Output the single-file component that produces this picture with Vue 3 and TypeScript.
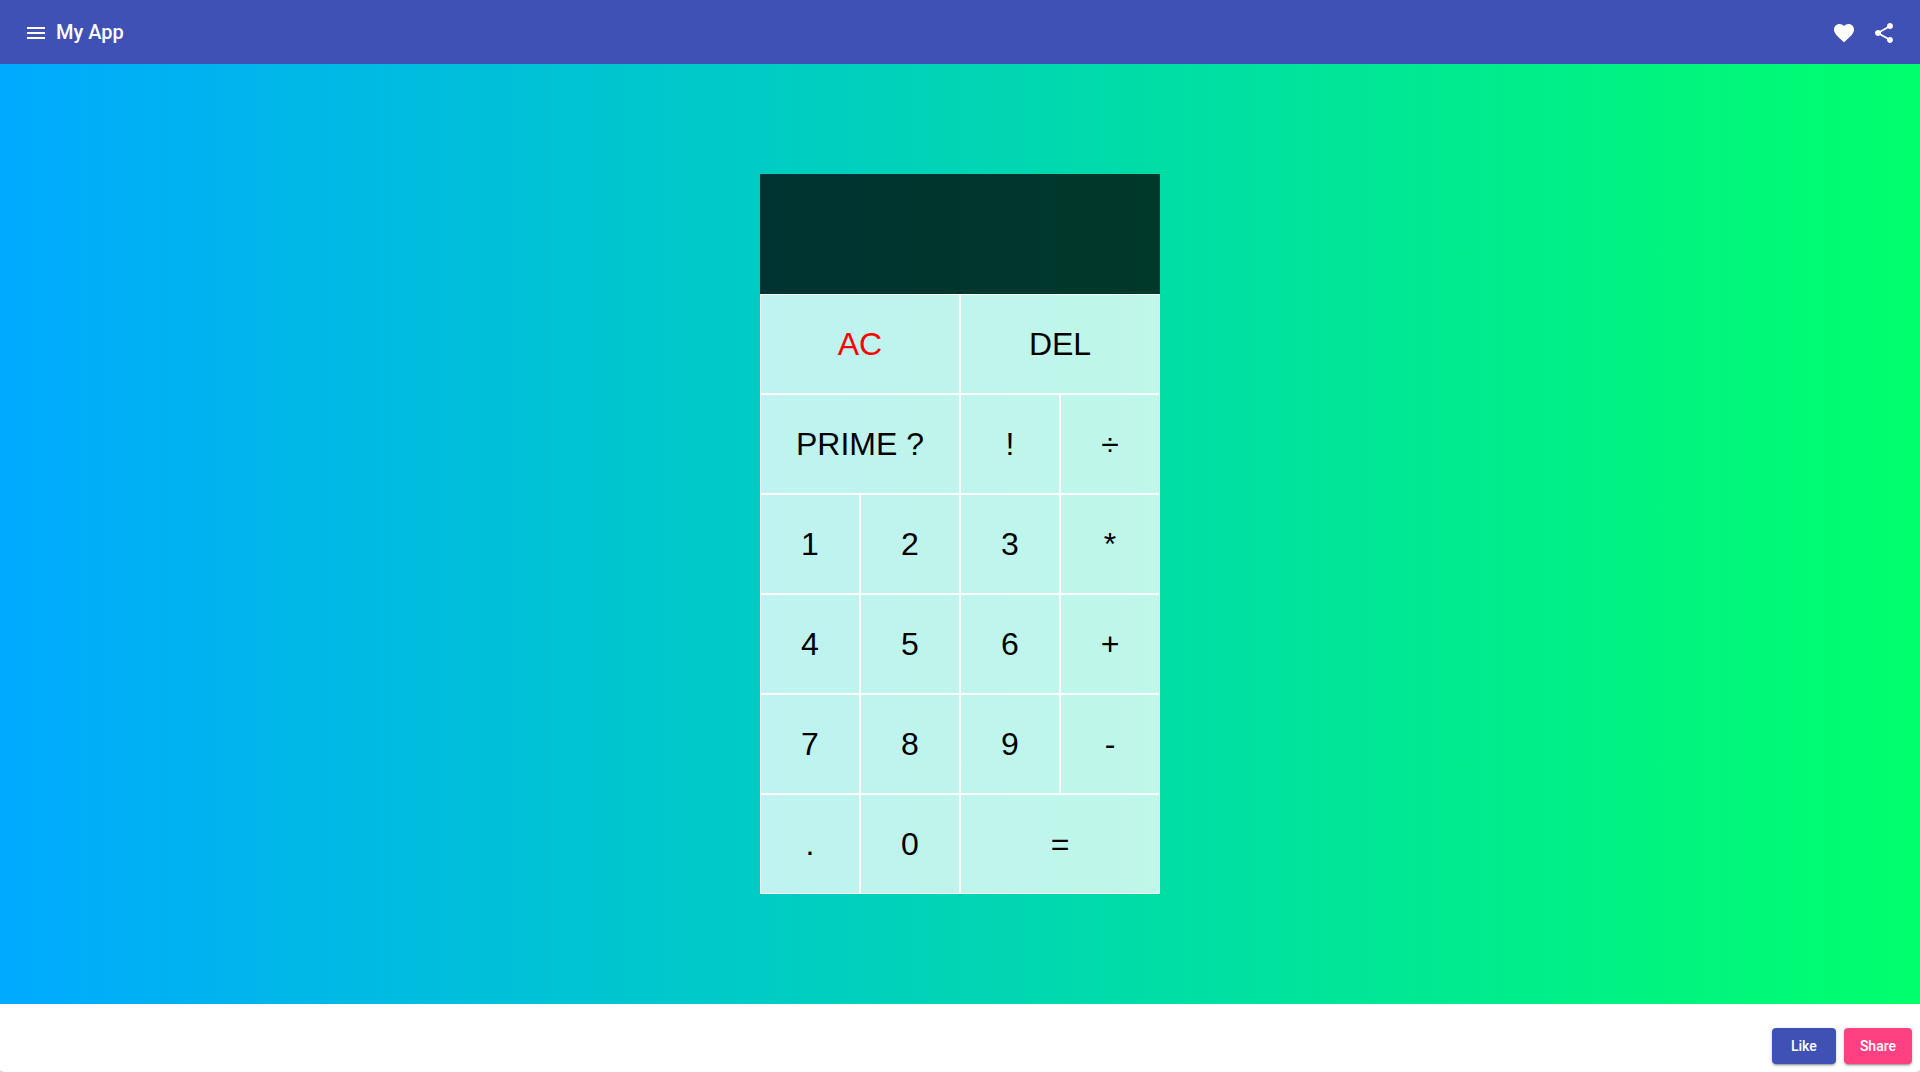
<script setup lang="ts">
import { ref } from 'vue'

interface Key {
  label: string
  wide?: boolean
  danger?: boolean
}

const keys: Key[] = [
  { label: 'AC', wide: true, danger: true },
  { label: 'DEL', wide: true },
  { label: 'PRIME ?', wide: true },
  { label: '!' },
  { label: '÷' },
  { label: '1' },
  { label: '2' },
  { label: '3' },
  { label: '*' },
  { label: '4' },
  { label: '5' },
  { label: '6' },
  { label: '+' },
  { label: '7' },
  { label: '8' },
  { label: '9' },
  { label: '-' },
  { label: '.' },
  { label: '0' },
  { label: '=', wide: true },
]

const current = ref('')
const previous = ref('')
const operator = ref('')

function compute(a: number, b: number, op: string): number {
  switch (op) {
    case '+': return a + b
    case '-': return a - b
    case '*': return a * b
    default: return a / b
  }
}

function evaluate(): void {
  if (!operator.value || current.value === '') return
  current.value = String(compute(Number(previous.value), Number(current.value), operator.value))
  previous.value = ''
  operator.value = ''
}

function factorial(n: number): number {
  let result = 1
  for (let i = 2; i <= Math.min(n, 171); i++) result *= i
  return result
}

function isPrime(n: number): boolean {
  if (n < 2 || !Number.isInteger(n)) return false
  for (let i = 2; i * i <= n; i++) if (n % i === 0) return false
  return true
}

function press(label: string): void {
  if (/^\d$/.test(label)) {
    current.value += label
  } else if (label === '.') {
    if (!current.value.includes('.')) current.value += label
  } else if (label === 'AC') {
    current.value = previous.value = operator.value = ''
  } else if (label === 'DEL') {
    current.value = current.value.slice(0, -1)
  } else if (label === '=') {
    evaluate()
  } else if (current.value !== '') {
    if (label === '!') {
      current.value = String(factorial(Number(current.value)))
    } else if (label === 'PRIME ?') {
      previous.value = `${current.value} ${isPrime(Number(current.value)) ? 'is prime' : 'is not prime'}`
      current.value = ''
    } else {
      evaluate()
      previous.value = current.value
      operator.value = label
      current.value = ''
    }
  }
}
</script>

<template>
  <div class="card">
    <header class="toolbar">
      <button class="icon-button" type="button" aria-label="Menu">
        <svg viewBox="0 0 24 24"><path d="M3 18h18v-2H3v2zm0-5h18v-2H3v2zm0-7v2h18V6H3z" /></svg>
      </button>
      <h1 class="title">My App</h1>
      <div class="toolbar-actions">
        <button class="icon-button" type="button" aria-label="Favorite">
          <svg viewBox="0 0 24 24"><path d="M12 21.35l-1.45-1.32C5.4 15.36 2 12.28 2 8.5 2 5.42 4.42 3 7.5 3c1.74 0 3.41.81 4.5 2.09C13.09 3.81 14.76 3 16.5 3 19.58 3 22 5.42 22 8.5c0 3.78-3.4 6.86-8.55 11.54L12 21.35z" /></svg>
        </button>
        <button class="icon-button" type="button" aria-label="Share">
          <svg viewBox="0 0 24 24"><path d="M18 16.08c-.76 0-1.44.3-1.96.77L8.91 12.7c.05-.23.09-.46.09-.7s-.04-.47-.09-.7l7.05-4.11c.54.5 1.25.81 2.04.81 1.66 0 3-1.34 3-3s-1.34-3-3-3-3 1.34-3 3c0 .24.04.47.09.7L8.04 9.81C7.5 9.31 6.79 9 6 9c-1.66 0-3 1.34-3 3s1.34 3 3 3c.79 0 1.5-.31 2.04-.81l7.12 4.16c-.05.21-.08.43-.08.65 0 1.61 1.31 2.92 2.92 2.92 1.61 0 2.92-1.31 2.92-2.92s-1.31-2.92-2.92-2.92z" /></svg>
        </button>
      </div>
    </header>

    <main class="stage">
      <section class="calculator">
        <output class="display">
          <span class="previous">{{ previous }} {{ operator }}</span>
          <span class="current">{{ current }}</span>
        </output>
        <button
          v-for="key in keys"
          :key="key.label"
          class="key"
          :class="{ wide: key.wide, danger: key.danger }"
          type="button"
          @click="press(key.label)"
        >{{ key.label }}</button>
      </section>
    </main>

    <footer class="actions">
      <button class="action primary" type="button">Like</button>
      <button class="action accent" type="button">Share</button>
    </footer>
  </div>
</template>

<style>
body {
  margin: 0;
  background: #fff;
}
</style>

<style scoped>
.card {
  display: flex;
  flex-direction: column;
  min-height: 100vh;
  border-radius: 4px;
  box-shadow: 0 2px 1px -1px rgba(0, 0, 0, 0.2), 0 1px 1px rgba(0, 0, 0, 0.14), 0 1px 3px rgba(0, 0, 0, 0.12);
  font-family: Roboto, "Liberation Sans", sans-serif;
}

.toolbar {
  display: flex;
  align-items: center;
  gap: 8px;
  height: 64px;
  padding: 0 24px;
  background: #3f51b5;
  color: #fff;
}

.title {
  margin: 0;
  font-size: 20px;
  font-weight: 500;
  line-height: 32px;
}

.toolbar-actions {
  display: flex;
  gap: 16px;
  margin-left: auto;
}

.icon-button {
  width: 24px;
  height: 24px;
  margin-top: 2px;
  padding: 0;
  border: 0;
  background: none;
  color: inherit;
  cursor: pointer;
}

.icon-button svg {
  display: block;
  fill: currentColor;
}

.stage {
  display: flex;
  flex: 1;
  align-items: center;
  justify-content: center;
  background: linear-gradient(to right, #00aaff, #00ff6c);
}

.calculator {
  display: grid;
  grid-template-columns: repeat(4, 100px);
  grid-template-rows: 120px repeat(6, 100px);
}

.display {
  display: flex;
  grid-column: 1 / -1;
  flex-direction: column;
  align-items: flex-end;
  justify-content: space-around;
  padding: 8px;
  background: rgba(0, 0, 0, 0.75);
  color: #fff;
  overflow-wrap: anywhere;
}

.previous {
  font-size: 24px;
}

.current {
  font-size: 40px;
}

.key {
  padding: 0;
  border: 1px solid #fff;
  background: rgba(255, 255, 255, 0.75);
  color: #000;
  font-family: "Liberation Sans", Arial, sans-serif;
  font-size: 32px;
  cursor: pointer;
}

.key:hover {
  background: rgba(255, 255, 255, 0.9);
}

.wide {
  grid-column: span 2;
}

.danger {
  color: #f00;
}

.actions {
  display: flex;
  justify-content: flex-end;
  gap: 8px;
  padding: 24px 8px 8px;
}

.action {
  min-width: 64px;
  padding: 0 16px;
  border: 0;
  border-radius: 4px;
  box-shadow: 0 3px 1px -2px rgba(0, 0, 0, 0.2), 0 2px 2px rgba(0, 0, 0, 0.14), 0 1px 5px rgba(0, 0, 0, 0.12);
  color: #fff;
  font-family: inherit;
  font-size: 14px;
  font-weight: 500;
  line-height: 36px;
  cursor: pointer;
}

.primary {
  background: #3f51b5;
}

.accent {
  background: #ff4081;
}
</style>
